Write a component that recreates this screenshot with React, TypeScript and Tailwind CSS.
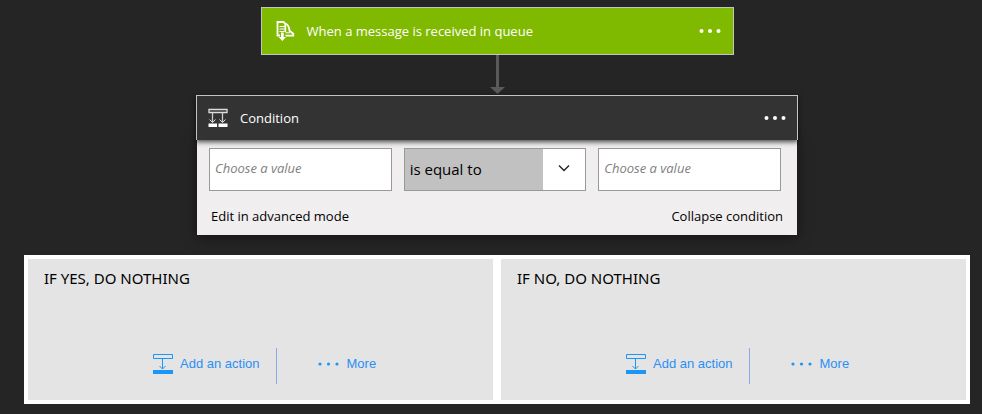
import type { ReactNode } from "react";

const sans = "font-['Open_Sans','Noto_Sans',sans-serif]";

function QueueIcon() {
  return (
    <svg width="20" height="22" viewBox="0 0 20 22" fill="none" aria-hidden="true">
      <path d="M5 15.500H2.500V2H8.500L10.300 4V12" stroke="#fff" strokeWidth="1.800" />
      <path d="M4.500 6.500H9.500M4.500 9H9.500M4.500 11.500H9.500" stroke="#fff" strokeWidth="1" />
      <path d="M9.500 3C12.500 4 14.300 6.500 14.500 10.800L18.300 13.800V15.700H10.500" stroke="#fff" strokeWidth="1.800" />
      <path d="M10.500 12.800H15" stroke="#fff" strokeWidth="1" />
      <path d="M6 12.500H8.700V17H11L7.300 21L3.700 17H6Z" fill="#fff" />
    </svg>
  );
}

function ConditionIcon() {
  return (
    <svg width="20" height="20" viewBox="0 0 20 20" fill="none" aria-hidden="true">
      <path d="M1 1.500H19V4.500H1Z" stroke="#ddd" strokeWidth="1.300" />
      <path d="M4.500 5V14M14.500 5V14" stroke="#ccc" strokeWidth="1.300" />
      <path d="M1.500 11.500L4.500 14.500L7.500 11.500M11.500 11.500L14.500 14.500L17.500 11.500" stroke="#ddd" />
      <path d="M0.500 15.500H9V19H0.500ZM10.500 15.500H19.500V19H10.500Z" fill="#fff" />
    </svg>
  );
}

function AddActionIcon() {
  return (
    <svg width="20" height="20" viewBox="0 0 20 20" fill="none" aria-hidden="true">
      <path d="M0.500 0.500H19.500V4.500H0.500Z" stroke="#1c97f7" />
      <path d="M9.500 5V15" stroke="#1c97f7" />
      <path d="M6.500 12L9.500 15L12.500 12" stroke="#1c97f7" />
      <path d="M0 16H20V20H0Z" fill="#1c97f7" />
    </svg>
  );
}

function Dots() {
  return (
    <svg width="22" height="6" viewBox="0 0 22 6" fill="#fff" aria-hidden="true">
      <circle cx="2.500" cy="3" r="2" />
      <circle cx="11" cy="3" r="2" />
      <circle cx="19.500" cy="3" r="2" />
    </svg>
  );
}

function MoreDots() {
  return (
    <svg width="22" height="4" viewBox="0 0 22 4" fill="#1c97f7" aria-hidden="true">
      <circle cx="2" cy="2" r="1.600" />
      <circle cx="10.500" cy="2" r="1.600" />
      <circle cx="19" cy="2" r="1.600" />
    </svg>
  );
}

function CardHeader({ icon, title, className }: { icon: ReactNode; title: string; className: string }) {
  return (
    <header className={`flex items-center text-white ${className}`}>
      {icon}
      <h2 className="flex-1 pl-3 text-[13px] leading-5">{title}</h2>
      <button type="button" aria-label={`${title} menu`}>
        <Dots />
      </button>
    </header>
  );
}

function ValueInput({ label }: { label: string }) {
  return (
    <input
      type="text"
      aria-label={label}
      placeholder="Choose a value"
      className="h-[43px] w-full border border-[#999] bg-white px-[5px] pb-1 text-[13px] text-black placeholder:text-[#808080] placeholder:italic"
    />
  );
}

function Branch({ title }: { title: string }) {
  return (
    <section className="flex-1 bg-[#e4e4e4] pb-4">
      <h3 className="px-4 pt-2 font-['Noto_Sans',sans-serif] text-[15px] leading-[22px] text-black">{title}</h3>
      <div className="mt-[59px] flex h-9 items-center pl-[125px] font-['Liberation_Sans',Arial,sans-serif] text-[13px] text-[#2b8ff5]">
        <button type="button" className="flex items-center gap-[7px] pb-1 whitespace-nowrap">
          <AddActionIcon />
          Add an action
        </button>
        <div className="ml-4 h-9 w-px bg-[#8ca8e8]" />
        <button type="button" className="ml-[41px] flex items-center gap-[7px] pb-1">
          <MoreDots />
          More
        </button>
      </div>
    </section>
  );
}

export default function App() {
  return (
    <main className={`flex min-h-screen flex-col items-center bg-[#252525] pt-[7px] pr-3 pl-6 ${sans}`}>
      <section className="w-full max-w-[473px]">
        <CardHeader
          icon={<QueueIcon />}
          title="When a message is received in queue"
          className="h-12 border border-[#c4c4c4] bg-[#80ba00] pr-3 pl-[13px]"
        />
      </section>

      <svg width="16" height="40" viewBox="0 0 16 40" aria-hidden="true">
        <path d="M7 0H10V32H16L8.500 39L1 32H7Z" fill="#5a5a5a" />
      </svg>

      <section className="w-full max-w-[602px]">
        <CardHeader
          icon={<ConditionIcon />}
          title="Condition"
          className="relative h-[45px] border border-b-0 border-[#c4c4c4] bg-[#333] px-[11px] shadow-[0_2px_5px_rgba(0,0,0,0.7)]"
        />
        <div className="mx-px bg-[#f0eeef] px-3 pt-2 pb-2 shadow-[0_2px_12px_rgba(0,0,0,0.5)]">
          <div className="grid grid-cols-3 gap-3 pr-1">
            <ValueInput label="First value" />
            <div className="relative h-[43px]">
              <select
                aria-label="Comparison"
                className="h-full w-full appearance-none border border-[#999] bg-[#c1c1c1] pl-[5px] text-[15px] text-black"
              >
                <option>is equal to</option>
              </select>
              <div className="pointer-events-none absolute inset-y-px right-px flex w-[42px] items-center justify-center bg-white pb-1">
                <svg width="12" height="8" viewBox="0 0 12 8" fill="none" aria-hidden="true">
                  <path d="M1 1.500L6 6.500L11 1.500" stroke="#222" strokeWidth="1.400" />
                </svg>
              </div>
            </div>
            <ValueInput label="Second value" />
          </div>
          <div className="mt-[14px] flex justify-between px-0.5 text-[13px] leading-[22px] text-black">
            <button type="button">Edit in advanced mode</button>
            <button type="button">Collapse condition</button>
          </div>
        </div>
      </section>

      <div className="mt-5 flex w-full gap-2 border-4 border-white bg-white">
        <Branch title="IF YES, DO NOTHING" />
        <Branch title="IF NO, DO NOTHING" />
      </div>
    </main>
  );
}
